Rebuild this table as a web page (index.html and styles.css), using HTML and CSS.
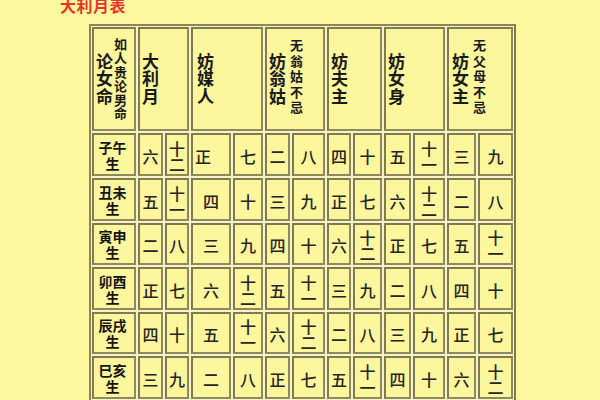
FILE: index.html
```html
<!DOCTYPE html>
<html lang="zh">
<head>
<meta charset="utf-8">
<title>大利月表</title>
<link rel="stylesheet" href="styles.css">
</head>
<body>
<div class="page">
  <div class="title">大利月表</div>
  <div class="grid">
    <div class="cell head"><span class="v main">论女命</span><span class="v note six">如人贵论男命</span></div>
    <div class="cell head span2"><span class="v main">大利月</span></div>
    <div class="cell head span2 pad4"><span class="v main">妨媒人</span></div>
    <div class="cell head span2"><span class="v main">妨翁姑</span><span class="v note five">无翁姑不忌</span></div>
    <div class="cell head span2"><span class="v main">妨夫主</span></div>
    <div class="cell head span2"><span class="v main">妨女身</span></div>
    <div class="cell head span2 pad3"><span class="v main">妨女主</span><span class="v note five">无父母不忌</span></div>

    <div class="cell label">子午生</div>
    <div class="cell num"><span class="n">六</span></div>
    <div class="cell num"><span class="n">十二</span></div>
    <div class="cell num left"><span class="n">正</span></div>
    <div class="cell num"><span class="n">七</span></div>
    <div class="cell num"><span class="n">二</span></div>
    <div class="cell num"><span class="n">八</span></div>
    <div class="cell num"><span class="n">四</span></div>
    <div class="cell num"><span class="n">十</span></div>
    <div class="cell num"><span class="n">五</span></div>
    <div class="cell num"><span class="n">十一</span></div>
    <div class="cell num"><span class="n">三</span></div>
    <div class="cell num"><span class="n">九</span></div>

    <div class="cell label">丑未生</div>
    <div class="cell num"><span class="n">五</span></div>
    <div class="cell num"><span class="n">十一</span></div>
    <div class="cell num"><span class="n">四</span></div>
    <div class="cell num"><span class="n">十</span></div>
    <div class="cell num"><span class="n">三</span></div>
    <div class="cell num"><span class="n">九</span></div>
    <div class="cell num"><span class="n">正</span></div>
    <div class="cell num"><span class="n">七</span></div>
    <div class="cell num"><span class="n">六</span></div>
    <div class="cell num"><span class="n">十二</span></div>
    <div class="cell num"><span class="n">二</span></div>
    <div class="cell num"><span class="n">八</span></div>

    <div class="cell label">寅申生</div>
    <div class="cell num"><span class="n">二</span></div>
    <div class="cell num"><span class="n">八</span></div>
    <div class="cell num"><span class="n">三</span></div>
    <div class="cell num"><span class="n">九</span></div>
    <div class="cell num"><span class="n">四</span></div>
    <div class="cell num"><span class="n">十</span></div>
    <div class="cell num"><span class="n">六</span></div>
    <div class="cell num"><span class="n">十二</span></div>
    <div class="cell num"><span class="n">正</span></div>
    <div class="cell num"><span class="n">七</span></div>
    <div class="cell num"><span class="n">五</span></div>
    <div class="cell num"><span class="n">十一</span></div>

    <div class="cell label">卯酉生</div>
    <div class="cell num"><span class="n">正</span></div>
    <div class="cell num"><span class="n">七</span></div>
    <div class="cell num"><span class="n">六</span></div>
    <div class="cell num"><span class="n">十二</span></div>
    <div class="cell num"><span class="n">五</span></div>
    <div class="cell num"><span class="n">十一</span></div>
    <div class="cell num"><span class="n">三</span></div>
    <div class="cell num"><span class="n">九</span></div>
    <div class="cell num"><span class="n">二</span></div>
    <div class="cell num"><span class="n">八</span></div>
    <div class="cell num"><span class="n">四</span></div>
    <div class="cell num"><span class="n">十</span></div>

    <div class="cell label">辰戌生</div>
    <div class="cell num"><span class="n">四</span></div>
    <div class="cell num"><span class="n">十</span></div>
    <div class="cell num"><span class="n">五</span></div>
    <div class="cell num"><span class="n">十一</span></div>
    <div class="cell num"><span class="n">六</span></div>
    <div class="cell num"><span class="n">十二</span></div>
    <div class="cell num"><span class="n">二</span></div>
    <div class="cell num"><span class="n">八</span></div>
    <div class="cell num"><span class="n">三</span></div>
    <div class="cell num"><span class="n">九</span></div>
    <div class="cell num"><span class="n">正</span></div>
    <div class="cell num"><span class="n">七</span></div>

    <div class="cell label">巳亥生</div>
    <div class="cell num"><span class="n">三</span></div>
    <div class="cell num"><span class="n">九</span></div>
    <div class="cell num"><span class="n">二</span></div>
    <div class="cell num"><span class="n">八</span></div>
    <div class="cell num"><span class="n">正</span></div>
    <div class="cell num"><span class="n">七</span></div>
    <div class="cell num"><span class="n">五</span></div>
    <div class="cell num"><span class="n">十一</span></div>
    <div class="cell num"><span class="n">四</span></div>
    <div class="cell num"><span class="n">十</span></div>
    <div class="cell num"><span class="n">六</span></div>
    <div class="cell num"><span class="n">十二</span></div>
  </div>
</div>
</body>
</html>
```

FILE: styles.css
```css
html, body {
  margin: 0;
  padding: 0;
  background: #fdf89d;
  height: 100%;
  overflow: hidden;
}

.page {
  font-family: "Noto Sans CJK SC", "Noto Sans", sans-serif;
  color: #222;
}

.title {
  margin: -3px 0 0 60px;
  font-size: 16px;
  line-height: 16px;
  height: 16px;
  font-weight: bold;
  color: #e8352a;
  letter-spacing: 0.5px;
}

.grid {
  margin: 11px 0 0 89px;
  width: max-content;
  display: grid;
  grid-template-columns: 44px 25px 24px 40px 30px 25px 33px 24px 29px 27px 32px 29px 35px;
  grid-template-rows: 104px 43px 43px 42px 43px 42px 43px;
  gap: 2px;
  padding: 1px;
  border: 2px solid #8a865a;
  border-right-color: #7d7a50;
  background: #f8f4c6;
}

.cell {
  box-sizing: border-box;
  border: 2px solid #8c8a5e;
  border-top-color: #7e7b50;
  border-left-color: #7e7b50;
  background: #fcf69c;
  display: flex;
  align-items: center;
  justify-content: center;
}

.head {
  justify-content: flex-start;
  padding-left: 2px;
}

.span2 {
  grid-column: span 2;
}

.pad4 {
  padding-left: 4px;
}

.pad3 {
  padding-left: 3px;
}

.v {
  writing-mode: vertical-rl;
  font-weight: bold;
  color: #1a1a1a;
}

.main {
  font-size: 17px;
  line-height: 17px;
  letter-spacing: 0.5px;
}

.note {
  font-size: 13px;
  line-height: 14px;
  margin-left: 1px;
}

.note.six {
  letter-spacing: 0.8px;
  margin-left: 0;
}

.note.five {
  letter-spacing: 2.4px;
  margin-left: 3px;
  margin-top: -4px;
}

.label {
  font-size: 14px;
  line-height: 16px;
  font-weight: bold;
  text-align: center;
  padding-right: 3px;
  color: #151515;
}

.num {
  font-size: 16px;
  line-height: 16px;
  font-weight: 500;
  color: #252525;
}

.num.left {
  justify-content: flex-start;
  padding-left: 2px;
}

.n {
  display: inline-block;
  width: 1em;
  text-align: center;
  padding-top: 2px;
}
```
